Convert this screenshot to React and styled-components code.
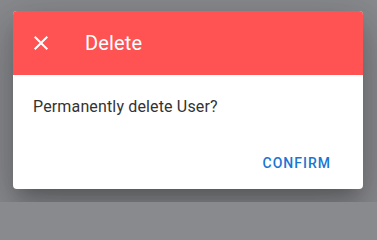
import React from "react";
import styled, { createGlobalStyle } from "styled-components";

const Global = createGlobalStyle`
  html, body { margin: 0; padding: 0; height: 202px; overflow: hidden; background: #898a8e; }
  body {
    font-family: Roboto, "Liberation Sans", sans-serif;
    width: 377px;
  }
`;

const Page = styled.div`
  box-sizing: border-box;
  width: 377px;
  height: 202px;
  overflow: hidden;
  padding: 11px 14px 0 13px;
`;

const Dialog = styled.div`
  width: 350px;
  height: 178px;
  background: #fff;
  border-radius: 4px;
  overflow: hidden;
  display: flex;
  flex-direction: column;
  box-shadow: 0px 11px 15px -7px rgba(0,0,0,0.2),
    0px 24px 38px 3px rgba(0,0,0,0.14),
    0px 9px 46px 8px rgba(0,0,0,0.12);
`;

const Header = styled.div`
  height: 64px;
  background: #ff5252;
  display: flex;
  align-items: center;
  padding: 0 16px;
  color: #fff;
`;

const IconButton = styled.button`
  width: 48px;
  height: 48px;
  margin-left: -12px;
  padding: 12px;
  border: 0;
  background: transparent;
  color: inherit;
  display: flex;
  align-items: center;
  justify-content: center;
  cursor: pointer;
`;

const Title = styled.h2`
  margin: 0 0 0 20px;
  font-size: 20px;
  font-weight: 400;
  line-height: 1.6;
  letter-spacing: 0.15px;
`;

const Content = styled.div`
  padding: 20px 20px 0;
  font-size: 16px;
  line-height: 24px;
  color: #333;
  letter-spacing: 0.15px;
`;

const Actions = styled.div`
  margin-top: auto;
  display: flex;
  justify-content: flex-end;
  padding: 8px 24px 8px 8px;
`;

const TextButton = styled.button`
  border: 0;
  background: transparent;
  color: #1976d2;
  font-family: Roboto, "Liberation Sans", sans-serif;
  font-size: 14px;
  font-weight: 500;
  letter-spacing: 1px;
  line-height: 24.5px;
  text-transform: uppercase;
  padding: 6px 8px;
  cursor: pointer;
`;

const CloseIcon = () => (
  <svg width="24" height="24" viewBox="0 0 24 24" fill="currentColor">
    <path d="M19 6.41 17.59 5 12 10.59 6.41 5 5 6.41 10.59 12 5 17.59 6.41 19 12 13.41 17.59 19 19 17.59 13.41 12z" />
  </svg>
);

export default function App() {
  return (
    <>
      <Global />
      <Page>
        <Dialog>
          <Header>
            <IconButton aria-label="close">
              <CloseIcon />
            </IconButton>
            <Title>Delete</Title>
          </Header>
          <Content>Permanently delete User?</Content>
          <Actions>
            <TextButton>Confirm</TextButton>
          </Actions>
        </Dialog>
      </Page>
    </>
  );
}
